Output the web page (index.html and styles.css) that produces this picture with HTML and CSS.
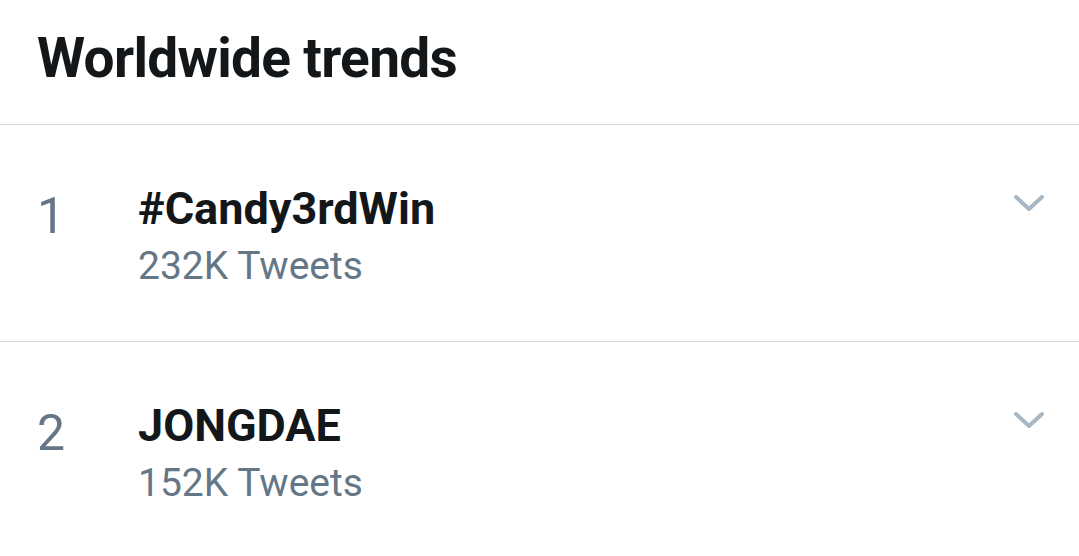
FILE: index.html
```html
<!DOCTYPE html>
<html>
<head>
<meta charset="utf-8">
<link rel="stylesheet" href="styles.css">
</head>
<body>
<div class="panel">
  <div class="header"><h1 class="title">Worldwide trends</h1></div>
  <div class="trend">
    <div class="rank">1</div>
    <div class="info">
      <div class="name">#Candy3rdWin</div>
      <div class="count">232K Tweets</div>
    </div>
    <svg class="chev" viewBox="0 0 32 20" width="32" height="20"><path d="M3 4 L16 16 L29 4" fill="none" stroke="#a8b7c4" stroke-width="4" stroke-linecap="round" stroke-linejoin="round"/></svg>
  </div>
  <div class="trend">
    <div class="rank">2</div>
    <div class="info">
      <div class="name">JONGDAE</div>
      <div class="count">152K Tweets</div>
    </div>
    <svg class="chev" viewBox="0 0 32 20" width="32" height="20"><path d="M3 4 L16 16 L29 4" fill="none" stroke="#a8b7c4" stroke-width="4" stroke-linecap="round" stroke-linejoin="round"/></svg>
  </div>
</div>
</body>
</html>
```
FILE: styles.css
```css
html, body { margin: 0; padding: 0; background: #fff; }
body { font-family: Roboto, "Noto Sans", sans-serif; width: 1079px; height: 556px; overflow: hidden; }
.panel { display: flex; flex-direction: column; }
.header { height: 125px; box-sizing: border-box; border-bottom: 1px solid #ccd6dd; padding: 28px 0 0 37px; }
.title { margin: 0; font-size: 55px; line-height: 60px; font-weight: 700; color: #14171a; letter-spacing: -0.7px; }
.trend { height: 217px; box-sizing: border-box; border-bottom: 1px solid #ccd6dd; display: flex; align-items: flex-start; }
.rank { width: 138px; box-sizing: border-box; padding-left: 37px; padding-top: 66px; font-size: 50px; line-height: 50px; color: #657786; }
.info { flex: 1; padding-top: 59px; }
.name { font-size: 45px; line-height: 50px; font-weight: 700; color: #14171a; }
.count { font-size: 39px; line-height: 50px; color: #657786; margin-top: 7px; }
.chev { margin-top: 68px; margin-right: 34px; }
```
